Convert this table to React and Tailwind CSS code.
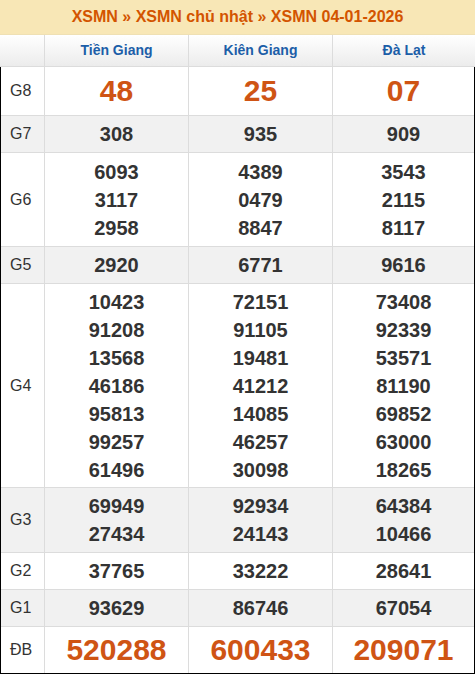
const rows = [
  { label: "G8", h: "h-[49px]", big: true, cols: [["48"], ["25"], ["07"]] },
  { label: "G7", h: "h-[37px]", gray: true, cols: [["308"], ["935"], ["909"]] },
  {
    label: "G6",
    h: "h-[94px]",
    cols: [
      ["6093", "3117", "2958"],
      ["4389", "0479", "8847"],
      ["3543", "2115", "8117"],
    ],
  },
  { label: "G5", h: "h-[37px]", gray: true, cols: [["2920"], ["6771"], ["9616"]] },
  {
    label: "G4",
    h: "h-[204px]",
    cols: [
      ["10423", "91208", "13568", "46186", "95813", "99257", "61496"],
      ["72151", "91105", "19481", "41212", "14085", "46257", "30098"],
      ["73408", "92339", "53571", "81190", "69852", "63000", "18265"],
    ],
  },
  {
    label: "G3",
    h: "h-[65px]",
    gray: true,
    cols: [
      ["69949", "27434"],
      ["92934", "24143"],
      ["64384", "10466"],
    ],
  },
  { label: "G2", h: "h-[37px]", cols: [["37765"], ["33222"], ["28641"]] },
  { label: "G1", h: "h-[37px]", gray: true, cols: [["93629"], ["86746"], ["67054"]] },
  { label: "ĐB", h: "h-[46px]", big: true, last: true, cols: [["520288"], ["600433"], ["209071"]] },
];

export default function App() {
  return (
    <div className="w-[475px] h-[675px] bg-white font-['Liberation_Sans',Arial,sans-serif]">
      <div className="h-[35px] bg-[#f8e7b6] border-b border-[#efe0b4] flex items-center justify-center text-[16px] font-bold text-[#d35400]">
        XSMN » XSMN chủ nhật » XSMN 04-01-2026
      </div>

      <div className="h-[32px] grid grid-cols-[44px_144px_144px_1fr] bg-linear-to-b from-white to-[#ececec] border-b border-[#dcdcdc]">
        <div />
        {["Tiền Giang", "Kiên Giang", "Đà Lạt"].map((n) => (
          <div
            key={n}
            className="border-l border-[#dcdcdc] flex items-center justify-center text-[14px] font-bold text-[#1c5ea8]"
          >
            {n}
          </div>
        ))}
      </div>

      <div className="border-x border-b border-black">
        {rows.map((r) => (
          <div
            key={r.label}
            className={`${r.h} grid grid-cols-[43px_144px_144px_1fr] ${r.gray ? "bg-[#f1f1f1]" : "bg-white"} ${r.last ? "" : "border-b border-[#dcdcdc]"}`}
          >
            <div className="flex items-center pl-[9px] text-[16px] text-[#333]">{r.label}</div>
            {r.cols.map((c, i) => (
              <div
                key={i}
                className="border-l border-[#dcdcdc] flex flex-col items-center justify-center"
              >
                {c.map((v) => (
                  <div
                    key={v}
                    className={
                      r.big
                        ? "text-[30px] leading-[34px] font-bold text-[#cf5414]"
                        : "text-[20px] leading-[28px] font-bold text-[#333]"
                    }
                  >
                    {v}
                  </div>
                ))}
              </div>
            ))}
          </div>
        ))}
      </div>
    </div>
  );
}
